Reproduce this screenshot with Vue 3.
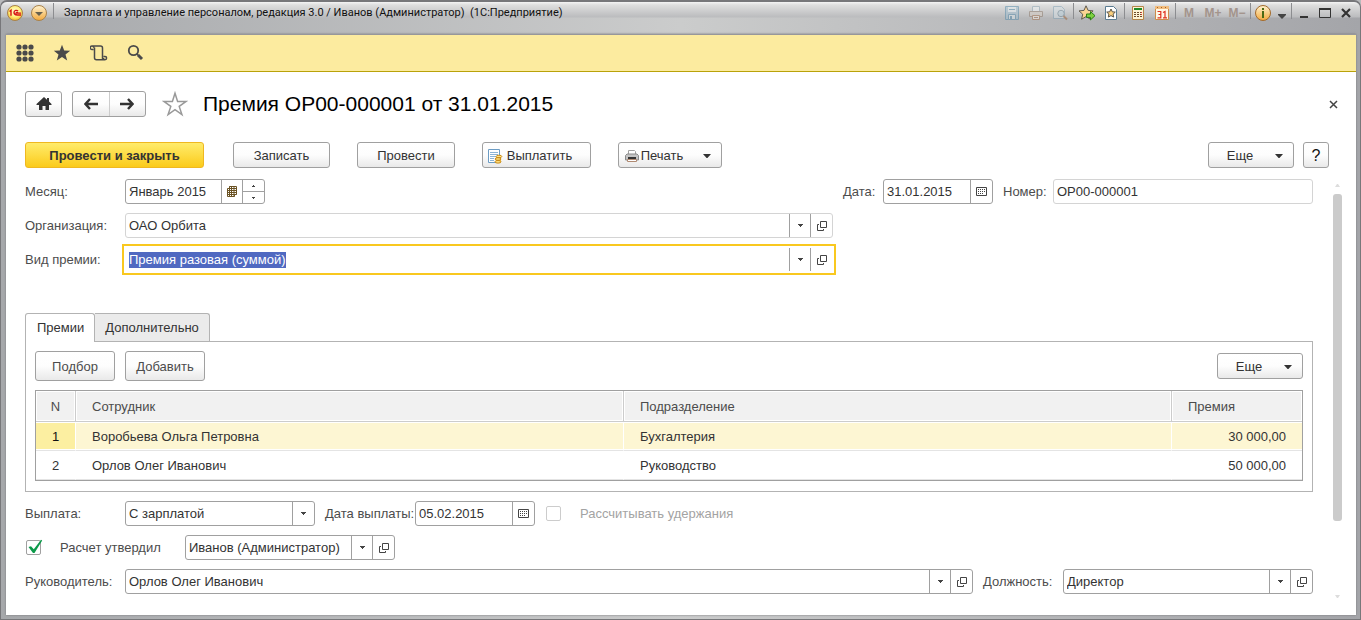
<script setup>
import { ref, onMounted } from 'vue'

const month = ref('Январь 2015')
const docDate = ref('31.01.2015')
const docNumber = ref('ОР00-000001')
const organization = ref('ОАО Орбита')
const bonusKind = ref('Премия разовая (суммой)')
const payment = ref('С зарплатой')
const payDate = ref('05.02.2015')
const approved = ref(true)
const deductions = ref(false)
const approver = ref('Иванов (Администратор)')
const manager = ref('Орлов Олег Иванович')
const position = ref('Директор')
const activeTab = ref('Премии')
const tabs = ['Премии', 'Дополнительно']
const selectedRow = ref(1)
const rows = [
  { n: 1, name: 'Воробьева Ольга Петровна', dept: 'Бухгалтерия', sum: '30 000,00' },
  { n: 2, name: 'Орлов Олег Иванович', dept: 'Руководство', sum: '50 000,00' }
]

const kindInput = ref(null)
onMounted(() => {
  kindInput.value.focus({ preventScroll: true })
  kindInput.value.select()
})
</script>

<template>
  <div class="window">
    <svg class="defs" width="0" height="0" aria-hidden="true">
      <defs>
        <linearGradient id="gold" x1="0" y1="0" x2="0" y2="1">
          <stop offset="0" stop-color="#fff3d0" />
          <stop offset="1" stop-color="#f3a93c" />
        </linearGradient>
        <radialGradient id="sun" cx="0.5" cy="0.4" r="0.6">
          <stop offset="0" stop-color="#fffde0" />
          <stop offset="0.6" stop-color="#fff07a" />
          <stop offset="1" stop-color="#f2b52a" />
        </radialGradient>
      </defs>
      <symbol id="i-drop" viewBox="0 0 5 3"><path d="M0 0h5v1H4v1H3v1H2V2H1V1H0z" fill="#444" /></symbol>
      <symbol id="i-open" viewBox="0 0 10 10">
        <path d="M3.5 .5h6v6h-6zM2 3.500H.5v6h6V8" fill="none" stroke="#444" />
      </symbol>
      <symbol id="i-cal" viewBox="0 0 11 9">
        <path d="M.5 .5h10v8H.5z" fill="none" stroke="#444" />
        <path d="M2 2.500h7M2 4.500h7M2 6.500h5" stroke="#444" stroke-dasharray="1 1" />
      </symbol>
      <symbol id="i-menu" viewBox="0 0 8 4"><path d="M0 0h8L4 4.500z" fill="#333" /></symbol>
    </svg>

    <header class="titlebar">
      <button class="round" aria-label="1С">
        <svg width="18" height="18" viewBox="0 0 18 18">
          <circle cx="9" cy="9" r="7.5" fill="url(#sun)" stroke="#a8814a" />
          <path d="M3.500 7.500l1.500-1.200v5.400M12 7.200c-.8-1.300-4-1.200-4 1.400 0 2.300 2 2.400 3.300 2.400H15M11.800 8.800c-.5-.6-1.700-.3-1.700.3h5" fill="none" stroke="#d71414" stroke-width="1.400" />
        </svg>
      </button>
      <button class="round last" aria-label="Главное меню">
        <svg width="18" height="18" viewBox="0 0 18 18">
          <circle cx="9" cy="9" r="7.5" fill="url(#gold)" stroke="#a8814a" />
          <path d="M5 8h8l-4 4z" fill="#66604f" />
        </svg>
      </button>
      <i class="sep first"></i>
      <div class="caption">Зарплата и управление персоналом, редакция 3.0 / Иванов (Администратор)&nbsp; (1С:Предприятие)</div>

      <button class="tool faded" aria-label="Сохранить">
        <svg width="16" height="16" viewBox="0 0 16 16">
          <path d="M1.500 1.500h13v13h-13z" fill="#9dbccd" stroke="#4e87a8" />
          <path d="M4 2h8v5H4z" fill="#e4edf1" /><path d="M5 4.500h6" stroke="#4e87a8" />
          <path d="M4.500 9.500h7v5h-7z" fill="#dbe6ea" stroke="#4e87a8" /><path d="M6 11h2v3H6z" fill="#4e87a8" />
        </svg>
      </button>
      <button class="tool faded" aria-label="Печать">
        <svg width="16" height="16" viewBox="0 0 16 16">
          <path d="M4.500 1.500h7v5h-7z" fill="#eef2f4" stroke="#8ba3b1" />
          <path d="M1.500 6.500h13v5h-13z" fill="#d5cbc2" stroke="#8a7666" />
          <path d="M4.500 10.500h7v4h-7z" fill="#f5ede4" stroke="#a06d4a" /><path d="M6 12.500h4" stroke="#a06d4a" />
        </svg>
      </button>
      <button class="tool faded" aria-label="Просмотр">
        <svg width="16" height="16" viewBox="0 0 16 16">
          <path d="M1.500 1.500h8l3 3v9h-11z" fill="#d6e0e5" stroke="#7fa0b4" />
          <circle cx="9" cy="8.500" r="3.200" fill="#bdd3de" stroke="#6d8594" /><path d="M11.500 11l3.500 3.500" stroke="#9b6238" stroke-width="2" />
        </svg>
      </button>
      <i class="sep"></i>
      <button class="tool" aria-label="Добавить в избранное">
        <svg width="18" height="16" viewBox="0 0 18 16">
          <path d="M8 .8l2.100 4.600 5 .5-3.800 3.300 1.100 5L8 11.600l-4.400 2.600 1.100-5L1 5.900l5-.5z" fill="#fbd492" stroke="#5f5a50" />
          <path d="M8.500 9h4V6.500l4.500 4.200-4.500 4.200v-2.500h-4z" fill="#7ed13f" stroke="#2b7d16" />
        </svg>
      </button>
      <button class="tool" aria-label="Избранное">
        <svg width="16" height="16" viewBox="0 0 16 16">
          <path d="M2.500 1.500h8l3 3v10h-11z" fill="#fff" stroke="#5b7c92" />
          <path d="M8 4l1.300 2.800 3 .3-2.200 2 .6 3L8 10.600l-2.700 1.500.6-3-2.200-2 3-.3z" fill="#fbd07e" stroke="#5a5448" />
        </svg>
      </button>
      <i class="sep"></i>
      <button class="tool" aria-label="Калькулятор">
        <svg width="16" height="16" viewBox="0 0 16 16">
          <path d="M2.500 1.500h11v13h-11z" fill="#fdf3d4" stroke="#b5854a" />
          <path d="M4 3h8v2H4z" fill="#1f8a28" />
          <path d="M4 7.500h8M4 9.500h8M4 11.500h8" stroke="#6d4a2c" stroke-dasharray="2 1" /><path d="M11 7.500h1M11 9.500h1" stroke="#d33" />
        </svg>
      </button>
      <button class="tool" aria-label="Календарь">
        <svg width="16" height="16" viewBox="0 0 16 16">
          <path d="M1.500 1.500h13v13h-13z" fill="#fff8e6" stroke="#cc8c4a" /><path d="M1 1h14v3H1z" fill="#f1bd7e" />
          <path d="M3 2.500h10" stroke="#a35f2a" stroke-dasharray="1 3" />
          <path d="M3.500 6.500h3.300v6.300H3.500M4.500 9.500h2M9 7.500l2-1v6.500M9 12.800h4" fill="none" stroke="#e0301e" stroke-width="1.200" />
        </svg>
      </button>
      <i class="sep"></i>
      <button class="tool mem">M</button>
      <button class="tool mem">M+</button>
      <button class="tool mem">M−</button>
      <i class="sep"></i>
      <button class="tool info" aria-label="Справка">
        <svg width="18" height="18" viewBox="0 0 18 18">
          <circle cx="9" cy="9" r="7.500" fill="url(#gold)" stroke="#a36a2b" />
          <path d="M8 4h2v2H8zM8 7h2v7H8z" fill="#4c6a14" />
        </svg>
      </button>
      <button class="tool more" aria-label="Дополнительно">
        <svg width="8" height="5" viewBox="0 0 8 5"><path d="M0 0h8v1L4 5 0 1z" fill="#444" /></svg>
      </button>
      <i class="sep"></i>
      <button class="win" aria-label="Свернуть"><svg width="12" height="12" viewBox="0 0 12 12"><path d="M2 9h8v2H2z" fill="#333" /></svg></button>
      <button class="win" aria-label="Развернуть"><svg width="12" height="12" viewBox="0 0 12 12"><path d="M.5 1.500h11v9H.5z" fill="none" stroke="#333" /><path d="M0 1h12v2H0z" fill="#333" /></svg></button>
      <button class="win" aria-label="Закрыть"><svg width="12" height="12" viewBox="0 0 12 12"><path d="M2 2l8 8M10 2l-8 8" stroke="#333" stroke-width="2.200" /></svg></button>
    </header>

    <main class="client">
      <nav class="sections">
        <button aria-label="Меню функций">
          <svg width="18" height="18" viewBox="0 0 18 18" fill="#4a4a4a">
            <template v-for="y in [3, 9, 15]" :key="y">
              <circle v-for="x in [3, 9, 15]" :key="x" :cx="x" :cy="y" r="2.600" />
            </template>
          </svg>
        </button>
        <button aria-label="Избранное">
          <svg width="18" height="18" viewBox="0 0 18 18"><path d="M9 .8l2.200 5.700 6 .2-4.700 3.800 1.700 6L9 13.100l-5.200 3.400 1.700-6L.8 6.700l6-.2z" fill="#4a4a4a" /></svg>
        </button>
        <button aria-label="История">
          <svg width="18" height="18" viewBox="0 0 18 18" fill="none" stroke="#4a4a4a" stroke-width="1.500">
            <path d="M3.500 5.500H2A1.800 1.800 0 1 1 3.800 3.700v0M2 2h8.500a2 2 0 0 1 2 2v8.500M4.500 3.500v10.300a2 2 0 0 0 2 2H15M13.500 12.500H15a1.600 1.600 0 1 1-1.600 1.600M12.500 12.500v1.500a1.700 1.700 0 0 0 2 1.800" />
          </svg>
        </button>
        <button aria-label="Поиск">
          <svg width="18" height="18" viewBox="0 0 18 18" fill="none" stroke="#4a4a4a">
            <circle cx="6.500" cy="6.500" r="4.700" stroke-width="1.800" /><path d="M10 10l1.500 1.500" stroke-width="1.500" /><path d="M11 11l4 4" stroke-width="3" />
          </svg>
        </button>
      </nav>

      <div class="heading">
        <button class="btn icon" aria-label="Начальная страница">
          <svg width="16" height="14" viewBox="0 0 16 14"><path d="M8 0l3 2.800V1h2v3.600L15.500 7v1H13v5H9.500V9h-3v4H3V8H.5V7z" fill="#333" /></svg>
        </button>
        <div class="pair">
          <button aria-label="Назад"><svg width="14" height="12" viewBox="0 0 14 12"><path d="M6 1L1.500 6 6 11M2 6h12" fill="none" stroke="#333" stroke-width="2.400" /></svg></button>
          <button aria-label="Вперед"><svg width="14" height="12" viewBox="0 0 14 12"><path d="M8 1l4.500 5L8 11M12 6H0" fill="none" stroke="#333" stroke-width="2.400" /></svg></button>
        </div>
        <button class="plain" aria-label="В избранное">
          <svg width="26" height="26" viewBox="0 0 26 26"><path d="M13 2.200l2.600 8.200h8.600l-7 5 2.700 8.200-6.900-5-6.900 5 2.700-8.200-7-5h8.600z" fill="none" stroke="#999" stroke-width="1.500" /></svg>
        </button>
        <h1>Премия ОР00-000001 от 31.01.2015</h1>
        <button class="plain close" aria-label="Закрыть форму">
          <svg width="9" height="9" viewBox="0 0 9 9"><path d="M1 1l7 7M8 1L1 8" stroke="#444" stroke-width="1.500" /></svg>
        </button>
      </div>

      <div class="commands">
        <button class="btn primary">Провести и закрыть</button>
        <button class="btn write">Записать</button>
        <button class="btn post">Провести</button>
        <button class="btn pay">
          <svg width="16" height="16" viewBox="0 0 16 16">
            <path d="M1.500 1.500h11v13h-11z" fill="#fff" stroke="#6c9cc4" />
            <path d="M3 4.500h8M3 6.500h8M3 8.500h6M3 10.500h4M3 12.500h4" stroke="#8cb4d6" />
            <path d="M9 8.500h5v6H9z" fill="#f0b93a" />
            <ellipse cx="12" cy="8.500" rx="2.800" ry="1.300" fill="#ffe285" stroke="#c88812" />
            <ellipse cx="11" cy="11" rx="3" ry="1.300" fill="#ffe285" stroke="#c88812" />
            <ellipse cx="11" cy="13.800" rx="3" ry="1.300" fill="#ffe285" stroke="#c88812" />
          </svg>
          Выплатить
        </button>
        <button class="btn print">
          <svg width="14" height="14" viewBox="0 0 14 14">
            <path d="M3.500 1.500h6l1 1v4h-7z" fill="#fff" stroke="#a0a0a0" />
            <path d="M.5 6.500L2 5h10l1.500 1.500v4.500H.5z" fill="#c4c4c4" stroke="#8a8a8a" />
            <path d="M3 8h8v2H3z" fill="#333" /><path d="M2.500 10.500h9v2h-9z" fill="#fff" stroke="#b08a72" />
          </svg>
          Печать
          <svg class="menu" width="8" height="4"><use href="#i-menu" /></svg>
        </button>
        <button class="btn etc">Еще<svg class="menu" width="8" height="4"><use href="#i-menu" /></svg></button>
        <button class="btn help">?</button>
      </div>

      <div class="scroller">
        <form class="form" @submit.prevent>
          <div class="row">
            <label class="lead" for="month">Месяц:</label>
            <div class="field w140">
              <input id="month" v-model="month" />
              <button type="button" aria-label="Выбрать месяц">
                <svg width="10" height="11" viewBox="0 0 10 11">
                  <path d="M2.500 .5h7v8h-2v2h-7v-8h2zM2.500 .5v10M4.500 .5v10M7 .5v10M.5 4.500h9M.5 6.500h9M.5 8.500h9M2.500 2.500h7" fill="none" stroke="#6a5223" />
                </svg>
              </button>
              <div class="spin">
                <button type="button" aria-label="Больше"><svg width="3" height="2" viewBox="0 0 3 2"><path d="M1 0h1v1h1v1H0V1h1z" fill="#444" /></svg></button>
                <button type="button" aria-label="Меньше"><svg width="3" height="2" viewBox="0 0 3 2"><path d="M0 0h3v1H2v1H1V1H0z" fill="#444" /></svg></button>
              </div>
            </div>
            <label class="push w40" for="date">Дата:</label>
            <div class="field w110">
              <input id="date" v-model="docDate" />
              <button type="button" aria-label="Календарь"><svg width="11" height="9"><use href="#i-cal" /></svg></button>
            </div>
            <label class="after w60" for="number">Номер:</label>
            <div class="field soft w260"><input id="number" v-model="docNumber" /></div>
          </div>

          <div class="row">
            <label class="lead" for="org">Организация:</label>
            <div class="field soft wide">
              <input id="org" v-model="organization" />
              <button type="button" aria-label="Список"><svg width="5" height="3"><use href="#i-drop" /></svg></button>
              <button type="button" aria-label="Открыть"><svg width="10" height="10"><use href="#i-open" /></svg></button>
            </div>
          </div>

          <div class="row">
            <label class="lead" for="kind">Вид премии:</label>
            <div class="field active wide">
              <input id="kind" ref="kindInput" v-model="bonusKind" />
              <button type="button" aria-label="Список"><svg width="5" height="3"><use href="#i-drop" /></svg></button>
              <button type="button" aria-label="Открыть"><svg width="10" height="10"><use href="#i-open" /></svg></button>
            </div>
          </div>

          <div class="tabs" role="tablist">
            <button v-for="t in tabs" :key="t" type="button" role="tab" :aria-selected="t === activeTab" :class="{ on: t === activeTab }" @click="activeTab = t">{{ t }}</button>
          </div>
          <section class="panel">
            <div class="bar">
              <button type="button" class="btn tall">Подбор</button>
              <button type="button" class="btn tall">Добавить</button>
              <button type="button" class="btn etc">Еще<svg class="menu" width="8" height="4"><use href="#i-menu" /></svg></button>
            </div>
            <table>
              <colgroup><col class="c-n" /><col /><col /><col class="c-sum" /></colgroup>
              <thead>
                <tr><th class="n">N</th><th>Сотрудник</th><th>Подразделение</th><th>Премия</th></tr>
              </thead>
              <tbody>
                <tr v-for="r in rows" :key="r.n" :class="{ sel: r.n === selectedRow }" @click="selectedRow = r.n">
                  <td class="n">{{ r.n }}</td><td>{{ r.name }}</td><td>{{ r.dept }}</td><td class="sum">{{ r.sum }}</td>
                </tr>
              </tbody>
            </table>
          </section>

          <div class="row">
            <label class="lead" for="payment">Выплата:</label>
            <div class="field w190">
              <select id="payment" v-model="payment"><option>С зарплатой</option></select>
              <span class="mark"><svg width="5" height="3"><use href="#i-drop" /></svg></span>
            </div>
            <label class="after w100" for="paydate">Дата выплаты:</label>
            <div class="field w120">
              <input id="paydate" v-model="payDate" />
              <button type="button" aria-label="Календарь"><svg width="11" height="9"><use href="#i-cal" /></svg></button>
            </div>
            <label class="check off">
              <span class="box"><input v-model="deductions" type="checkbox" disabled /></span>
              Рассчитывать удержания
            </label>
          </div>

          <div class="row">
            <label class="check w160">
              <span class="box">
                <input v-model="approved" type="checkbox" />
                <svg v-if="approved" width="16" height="16" viewBox="0 0 16 16"><path d="M1.500 8l2.500-.8 2.800 3L14 .8l1.200.7L7.500 14H6z" fill="#0c9a4a" /></svg>
              </span>
              Расчет утвердил
            </label>
            <div class="field w210">
              <input v-model="approver" aria-label="Утвердил" />
              <button type="button" aria-label="Список"><svg width="5" height="3"><use href="#i-drop" /></svg></button>
              <button type="button" aria-label="Открыть"><svg width="10" height="10"><use href="#i-open" /></svg></button>
            </div>
          </div>

          <div class="row">
            <label class="lead" for="manager">Руководитель:</label>
            <div class="field grow">
              <input id="manager" v-model="manager" />
              <button type="button" aria-label="Список"><svg width="5" height="3"><use href="#i-drop" /></svg></button>
              <button type="button" aria-label="Открыть"><svg width="10" height="10"><use href="#i-open" /></svg></button>
            </div>
            <label class="after w90" for="position">Должность:</label>
            <div class="field w250">
              <input id="position" v-model="position" />
              <button type="button" aria-label="Список"><svg width="5" height="3"><use href="#i-drop" /></svg></button>
              <button type="button" aria-label="Открыть"><svg width="10" height="10"><use href="#i-open" /></svg></button>
            </div>
          </div>
        </form>
        <div class="track" aria-hidden="true">
          <svg width="5" height="3" viewBox="0 0 5 3"><path d="M2 0h1l2 3H0z" fill="#ddd" /></svg>
          <div class="thumb"></div>
          <svg width="5" height="3" viewBox="0 0 5 3"><path d="M0 0h5L3 3H2z" fill="#ddd" /></svg>
        </div>
      </div>
    </main>
  </div>
</template>

<style>
body {
  background: #b9babc;
}
</style>

<style scoped>
.window,
.window * {
  box-sizing: border-box;
}
.window {
  min-height: 100vh;
  display: flex;
  flex-direction: column;
  padding: 0 4px 4px 5px;
  border: 1px solid #77777a;
  border-top-width: 2px;
  border-radius: 7px 7px 0 0;
  background: linear-gradient(90deg, #a6a8ab 0, #cbcccc 50%, #a4a5a9 100%);
  font: 13px/16px "Liberation Sans", Arial, sans-serif;
  color: #333;
}
.defs {
  position: absolute;
}
button,
input,
select {
  font: inherit;
  color: inherit;
  margin: 0;
  padding: 0;
  border: 0;
  background: none;
  outline: none;
}
button {
  display: flex;
  align-items: center;
  justify-content: center;
  white-space: nowrap;
}
svg {
  flex: none;
}

.titlebar {
  display: flex;
  align-items: flex-start;
  height: 32px;
  margin: 0 -4px 0 -5px;
  padding: 0 4px 0 5px;
  border-radius: 6px 6px 0 0;
  background: linear-gradient(180deg, #f4f4f4 0, #dedede 3px, #bbbcbe 15px, transparent 16px);
}
.titlebar button {
  height: 22px;
}
.round {
  width: 18px;
  margin-right: 6px;
}
.round.last {
  margin-right: 4px;
}
.sep {
  width: 1px;
  height: 16px;
  margin: 1px;
  background: #8c8d90;
}
.sep.first {
  margin-right: 10px;
}
.caption {
  flex: 1;
  min-width: 0;
  overflow: hidden;
  white-space: nowrap;
  font: 11px/22px Roboto, Tahoma, sans-serif;
  color: #111;
}
.tool {
  width: 24px;
}
.faded {
  opacity: 0.5;
}
.titlebar .mem {
  font-weight: bold;
  font-size: 12px;
  color: #a3948c;
}
.info {
  width: 22px;
}
.more {
  width: 16px;
  padding-top: 6px;
}
.win {
  width: 21px;
}

.client {
  flex: 1;
  display: flex;
  flex-direction: column;
  background: #fff;
  border-top: 1px solid #97979b;
  box-shadow: 0 0 2px #77777a;
}
.sections {
  display: flex;
  gap: 19px;
  height: 37px;
  padding: 0 10px;
  background: #fceb9f;
  border-bottom: 1px solid #b9a20a;
}

.heading {
  display: flex;
  align-items: center;
  margin: 19px 14px 0 19px;
}
.btn {
  height: 26px;
  padding-top: 1px;
  border: 1px solid #a0a0a0;
  border-radius: 3px;
  background: linear-gradient(180deg, #fff 0, #fdfdfd 50%, #e9e9e9 100%);
}
.btn.icon {
  width: 37px;
  margin-right: 10px;
  padding: 0;
}
.pair {
  display: flex;
  width: 74px;
  height: 26px;
  border: 1px solid #a0a0a0;
  border-radius: 3px;
  background: linear-gradient(180deg, #fff 0, #fdfdfd 50%, #e9e9e9 100%);
}
.pair button {
  flex: 1;
}
.pair button + button {
  border-left: 1px solid #ccc;
}
.heading > .plain {
  margin-left: 16px;
}
.heading > .close {
  margin-left: auto;
  padding: 4px;
}
h1 {
  margin: 0 0 0 15px;
  font-size: 21px;
  line-height: 26px;
  font-weight: normal;
  color: #000;
}

.commands {
  display: flex;
  margin: 25px 27px 0 19px;
}
.primary {
  width: 179px;
  margin-right: 29px;
  border-color: #efb821;
  background: linear-gradient(180deg, #ffec6c 0, #fbcb1b 100%);
  font-weight: bold;
}
.write {
  width: 97px;
  margin-right: 27px;
}
.post {
  width: 98px;
  margin-right: 27px;
}
.pay {
  width: 109px;
  gap: 4px;
  margin-right: 27px;
  padding-right: 14px;
}
.print {
  width: 104px;
  gap: 2px;
  padding-right: 4px;
}
.print .menu {
  margin-left: 18px;
}
.etc {
  width: 86px;
  gap: 22px;
  margin-left: auto;
  padding-left: 8px;
}
.help {
  width: 26px;
  margin-left: 9px;
  font-size: 16px;
  color: #111;
}

.scroller {
  flex: 1;
  display: flex;
  padding: 11px 14px 10px 19px;
}
.form {
  flex: 1;
  min-width: 0;
}
.row {
  display: flex;
  align-items: center;
  height: 25px;
  margin-bottom: 9px;
}
label {
  white-space: nowrap;
  color: #4c4c4c;
}
.lead {
  width: 100px;
}
.push {
  margin-left: auto;
}
.after {
  padding-left: 10px;
}
.w40 { width: 40px; }
.w60 { width: 60px; }
.w90 { width: 90px; }
.w100 { width: 100px; }
.w110 { width: 110px; }
.w120 { width: 120px; }
.w140 { width: 140px; }
.w160 { width: 160px; }
.w190 { width: 190px; }
.w210 { width: 210px; }
.w250 { width: 250px; }
.w260 { width: 260px; }
.wide { width: 55%; }
.grow { flex: 1; }
.field {
  display: flex;
  height: 25px;
  border: 1px solid #a0a0a0;
  border-radius: 3px;
  background: #fff;
}
.field.soft {
  border-color: #d4d4d4;
}
.field.active {
  border-color: transparent;
  border-radius: 0;
  outline: 2px solid #f9c81f;
  outline-offset: 1px;
}
.field input,
.field select {
  flex: 1;
  min-width: 0;
  width: 0;
  padding: 0 3px;
  appearance: none;
}
.field input::selection {
  background: #5069c1;
  color: #fff;
}
.field > button,
.mark {
  width: 21px;
  border-left: 1px solid #a0a0a0;
}
.field > button:last-child {
  width: 22px;
}
.mark {
  display: flex;
  align-items: center;
  justify-content: center;
  width: 22px;
  pointer-events: none;
}
.spin {
  display: flex;
  flex-direction: column;
  width: 22px;
  border-left: 1px solid #a0a0a0;
}
.spin button {
  flex: 1;
}
.spin button + button {
  border-top: 1px solid #a0a0a0;
}
.check {
  display: flex;
  align-items: center;
  gap: 18px;
}
.check.off {
  margin-left: 11px;
  color: #a3a3a3;
}
.box {
  position: relative;
  display: flex;
  width: 16px;
  height: 15px;
}
.box input {
  width: 15px;
  height: 15px;
  border: 1px solid #a0a0a0;
  border-radius: 2px;
  appearance: none;
}
.w160 .box {
  margin-left: 1px;
}
.off input {
  border-color: #ccc;
}
.box svg {
  position: absolute;
  left: 1px;
  top: -1px;
  pointer-events: none;
}

.tabs {
  display: flex;
  margin-top: 41px;
}
.tabs button {
  height: 28px;
  padding: 0 10px;
  border: 1px solid #b3b3b3;
  border-bottom: 0;
  border-left: 0;
  border-radius: 0 3px 0 0;
  background: #ebebeb;
}
.tabs .on {
  height: 29px;
  margin-bottom: -1px;
  padding-left: 11px;
  border-left: 1px solid #b3b3b3;
  border-radius: 3px 3px 0 0;
  background: #fff;
  position: relative;
}
.panel {
  margin-bottom: 9px;
  padding: 9px 9px 10px;
  border: 1px solid #b3b3b3;
}
.bar {
  display: flex;
  align-items: center;
  gap: 10px;
  margin-bottom: 9px;
}
.tall {
  width: 80px;
  height: 30px;
  color: #4c4c4c;
}
table {
  width: 100%;
  table-layout: fixed;
  border-collapse: separate;
  border-spacing: 0;
  border: 1px solid #a0a0a0;
}
.c-n {
  width: 40px;
}
.c-sum {
  width: 130px;
}
th,
td {
  height: 29px;
  padding: 1px 16px 0;
  text-align: left;
  font-weight: normal;
}
th {
  height: 31px;
  color: #4c4c4c;
  background: #f1f1f1;
  border-right: 1px solid #ccc;
  border-bottom: 1px solid #ccc;
  box-shadow: inset 0 0 0 1px #fff;
}
td {
  border-right: 1px solid #fff;
  border-bottom: 1px solid #e4e4e4;
}
th:last-child,
td:last-child {
  border-right: 0;
}
th.n,
td.n {
  padding: 1px 0 0;
  text-align: center;
}
td.sum {
  text-align: right;
}
.sel td {
  background: #fdf6d3;
  box-shadow: inset 0 1px #fff, inset 0 -1px #fff;
}
.sel .n {
  background: #fcefa1;
  color: #111;
}

.track {
  display: flex;
  flex-direction: column;
  align-items: center;
  gap: 7px;
  width: 9px;
  margin: 5px 0 7px 20px;
}
.thumb {
  flex: 0 1 79%;
  width: 9px;
  border-radius: 3px;
  background: #cbcbcb;
}
.track svg:last-child {
  margin-top: auto;
}
</style>
